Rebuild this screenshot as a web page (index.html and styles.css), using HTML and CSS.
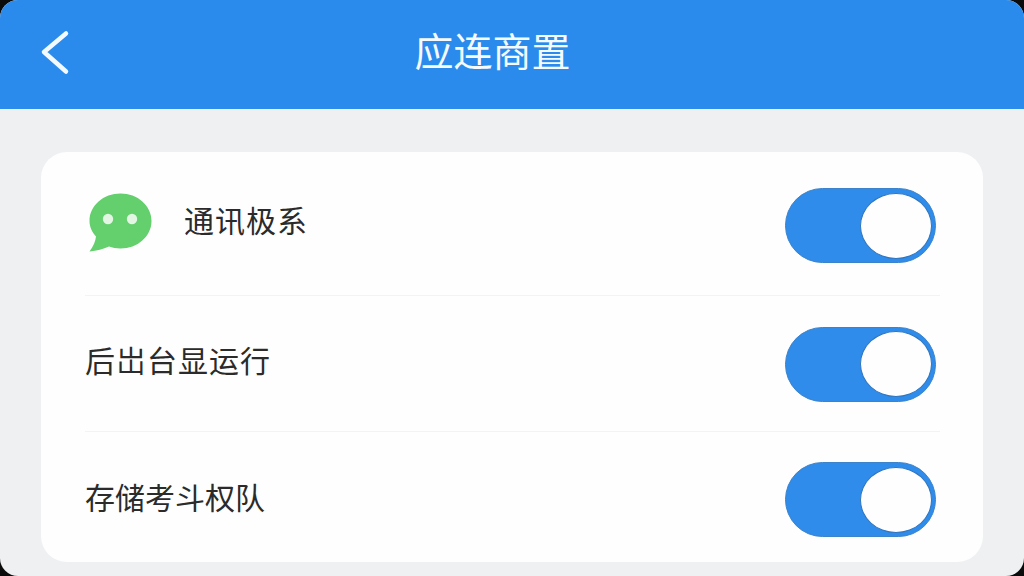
FILE: index.html
```html
<!doctype html>
<html lang="zh">
<head>
	<meta charset="UTF-8">
	<title>应连商置</title>
	<link rel="stylesheet" href="styles.css">
</head>
<body>
	<div class="pantalla">
		<header class="cabecera">
			<svg class="volver" width="32" height="46" viewBox="0 0 32 46">
				<path d="M26 3.5 L4 22 L26 41.5" fill="none" stroke="#f2f9ff" stroke-width="4.5" stroke-linecap="round" stroke-linejoin="round"/>
			</svg>
			<h1 class="titulo">应连商置</h1>
		</header>
		<main class="tarjeta">
			<div class="fila fila-uno">
				<div class="etiqueta">
					<svg class="burbuja" width="63" height="59" viewBox="0 0 63 59">
						<path d="M31.5 0.5 C48.5 0.5 62.5 12.5 62.5 28 C62.5 43.5 48.5 55.5 31.5 55.5 C27 55.5 23.5 54.8 20 53.5 C14 56 8 57.8 0.5 58.5 C4.5 53 6.5 48 7 43.5 C3 39 0.5 34 0.5 28 C0.5 12.5 14.5 0.5 31.5 0.5 Z" fill="#63cf6d"/>
						<circle cx="19" cy="26" r="5.2" fill="#e3f5e3"/>
						<circle cx="43" cy="26" r="5.2" fill="#e3f5e3"/>
					</svg>
					<span class="texto">通讯极系</span>
				</div>
				<div class="interruptor"><div class="perilla"></div></div>
			</div>
			<div class="fila fila-dos">
				<span class="texto">后岀台显运行</span>
				<div class="interruptor"><div class="perilla"></div></div>
			</div>
			<div class="fila fila-tres">
				<span class="texto">存储考斗权队</span>
				<div class="interruptor"><div class="perilla"></div></div>
			</div>
		</main>
	</div>
</body>
</html>
```
FILE: styles.css
```css
*{
	margin:0px;
	box-sizing:border-box;
}
html, body{
	height: 100%;
	overflow: hidden;
	background: #0b0b0b;
}
.pantalla{
	display: flex;
	flex-direction: column;
	height: 576px;
	border-radius: 18px;
	overflow: hidden;
	background: #eff0f2;
	font-family: "Noto Sans CJK SC", "Noto Sans", sans-serif;
}
.cabecera{
	display: flex;
	align-items: center;
	justify-content: center;
	position: relative;
	flex: none;
	height: 109px;
	padding-right: 39px;
	background: #2a8bec;
}
.volver{
	position: absolute;
	left: 40px;
	top: 30px;
}
.titulo{
	font-size: 39px;
	font-weight: 400;
	line-height: 1;
	color: #f5faff;
	margin-top: -11px;
}
.tarjeta{
	margin: 43px 41px 0px;
	padding: 0px 43px 0px 44px;
	height: 410px;
	background: #fefefe;
	border-radius: 26px;
}
.fila{
	display: flex;
	align-items: center;
	justify-content: space-between;
	padding-right: 4px;
	border-bottom: 1px solid #f3f3f3;
}
.fila-uno{
	height: 144px;
	padding-top: 4px;
}
.fila-dos{
	height: 136px;
	padding-top: 1px;
}
.fila-tres{
	height: 130px;
	padding-top: 5px;
	border-bottom: none;
}
.etiqueta{
	display: flex;
	align-items: center;
	gap: 32px;
	padding-left: 4px;
}
.burbuja{
	flex: none;
	margin-top: -7px;
}
.texto{
	font-size: 30px;
	letter-spacing: 1px;
	line-height: 1;
	color: #2b2b2b;
	margin-top: -6px;
}
.fila-uno .texto{
	margin-top: -13px;
}
.fila-dos .texto{
	margin-top: -10px;
}
.fila-tres .texto{
	margin-top: -8px;
	letter-spacing: 0px;
}
.interruptor{
	display: flex;
	align-items: center;
	justify-content: flex-end;
	flex: none;
	width: 151px;
	height: 75px;
	padding-right: 3px;
	background: #2f8ceb;
	border: 1px solid #3b83cb;
	border-radius: 38px;
}
.perilla{
	width: 72px;
	height: 66px;
	background: #fefefe;
	border: 1px solid #2f74bd;
	border-radius: 50%;
}
```
